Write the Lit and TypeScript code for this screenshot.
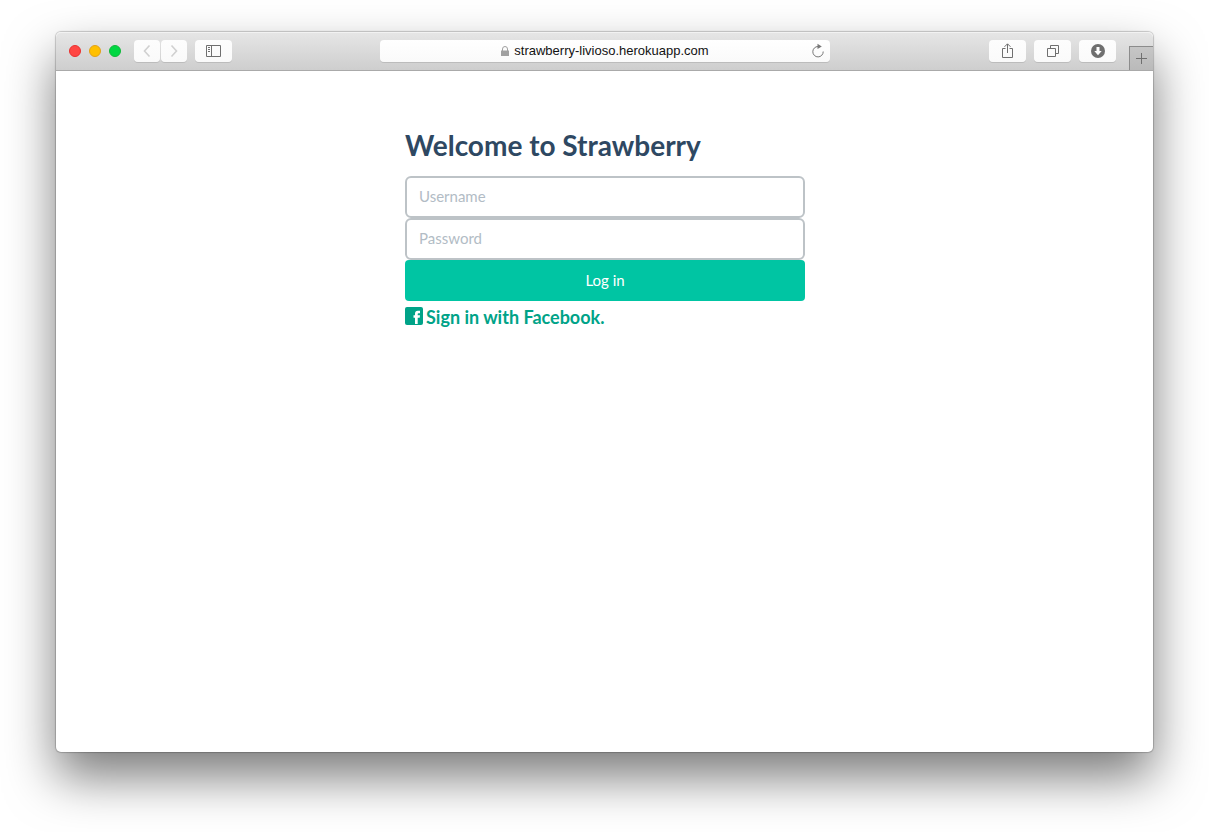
import { LitElement, html, css, svg } from "lit";
import { customElement } from "lit/decorators.js";

const icons = {
  back: svg`<path d="M9.500 1.500 4.500 7l5 5.500" stroke-width="1.600"/>`,
  forward: svg`<path d="M4.500 1.500l5 5.500-5 5.500" stroke-width="1.600"/>`,
};

@customElement("browser-toolbar")
class BrowserToolbar extends LitElement {
  static styles = css`
    :host {
      display: grid;
      grid-template-columns: 1fr minmax(0, 450px) 1fr;
      height: 39px;
      box-sizing: border-box;
      padding-left: 1px;
      background: linear-gradient(#e6e6e6, #cecece);
      border-bottom: 1px solid #aaa;
      box-shadow: inset 0 1px #f2f2f2;
      border-radius: 5px 5px 0 0;
      font: 13px/16px "Liberation Sans", Arial, sans-serif;
    }
    .group {
      display: flex;
      align-items: flex-start;
      padding-top: 8px;
      gap: 8px;
    }
    .left {
      padding-left: 12px;
    }
    .right {
      justify-content: flex-end;
      padding-top: 0;
    }
    .right .tool {
      margin-top: 8px;
    }
    .lights {
      display: flex;
      gap: 8px;
      padding: 5px 5px 0 0;
    }
    button {
      display: flex;
      align-items: center;
      justify-content: center;
      padding: 0;
      border: 0;
      font: inherit;
    }
    .light {
      width: 12px;
      height: 12px;
      border-radius: 50%;
      box-sizing: border-box;
    }
    .close {
      background: #ff4643;
      border: 1px solid #e9302f;
    }
    .minimise {
      background: #ffc000;
      border: 1px solid #e3a116;
    }
    .zoom {
      background: #00d742;
      border: 1px solid #10b83a;
    }
    .history {
      display: flex;
      gap: 1px;
    }
    .tool {
      width: 37px;
      height: 22px;
      border-radius: 4px;
      background: linear-gradient(#fdfdfd, #fafafa);
      box-shadow: 0 1px #bcbcbc;
    }
    .history .tool {
      width: 26px;
    }
    svg {
      display: block;
      fill: none;
      stroke: #6f6f6f;
    }
    .history svg {
      stroke: #d0d0d0;
    }
    .address {
      display: flex;
      align-items: center;
      height: 22px;
      margin-top: 8px;
      border-radius: 4px;
      background: linear-gradient(#fff, #fafafa);
      box-shadow: 0 1px #bcbcbc;
      color: #111;
    }
    .site {
      flex: 1;
      display: flex;
      justify-content: center;
      align-items: center;
      gap: 5px;
      padding-left: 20px;
    }
    .reload {
      width: 14px;
      height: 16px;
      margin-right: 6px;
      background: none;
    }
    .newtab {
      width: 24px;
      height: 24px;
      margin: 14px 0 0 5px;
      box-sizing: border-box;
      background: linear-gradient(#c6c6c6, #bababa);
      border-top: 1px solid #8c8c8c;
      border-left: 1px solid #8c8c8c;
    }
  `;

  render() {
    return html`
      <div class="group left">
        <div class="lights">
          <button class="light close" aria-label="Close"></button>
          <button class="light minimise" aria-label="Minimise"></button>
          <button class="light zoom" aria-label="Zoom"></button>
        </div>
        <div class="history">
          <button class="tool" aria-label="Back">
            <svg width="14" height="14">${icons.back}</svg>
          </button>
          <button class="tool" aria-label="Forward">
            <svg width="14" height="14">${icons.forward}</svg>
          </button>
        </div>
        <button class="tool" aria-label="Show sidebar">
          <svg width="15" height="12">
            <path d="M.5.5h14v11H.5zM5.5.5v11M2 2.500h2M2 4.500h2M2 6.500h2" />
          </svg>
        </button>
      </div>
      <div class="address">
        <div class="site">
          <svg width="8" height="10">
            <path d="M0 4.500h8V10H0z" fill="#a0a0a0" stroke="none" />
            <path d="M1.500 5V3a2.500 2.500 0 0 1 5 0v2" stroke="#a0a0a0" />
          </svg>
          <span>strawberry-livioso.herokuapp.com</span>
        </div>
        <button class="reload" aria-label="Reload">
          <svg width="14" height="16">
            <path d="M8 3.500A5.200 5.200 0 1 0 13.200 8.500" stroke="#777" />
            <path d="M7.500.8l4.300 2.700-4.300 2.500z" fill="#777" stroke="none" />
          </svg>
        </button>
      </div>
      <div class="group right">
        <button class="tool" aria-label="Share">
          <svg width="13" height="16">
            <path d="M4.500 5.500H1.500v9h10v-9h-3M6.500 10V1M3.500 3.800l3-3 3 3" />
          </svg>
        </button>
        <button class="tool" aria-label="Show all tabs">
          <svg width="13" height="12">
            <path d="M1.500 3.500h8v8h-8zM4.500 3V.5h8v8H10" />
          </svg>
        </button>
        <button class="tool" aria-label="Downloads">
          <svg width="14" height="14">
            <circle cx="7" cy="7" r="7" fill="#6f6f6f" stroke="none" />
            <path d="M5.500 3h3v4h2.200L7 11.200 3.300 7h2.200z" fill="#fff" stroke="none" />
          </svg>
        </button>
        <button class="newtab" aria-label="New tab">
          <svg width="11" height="11">
            <path d="M5.500 0v11M0 5.500h11" />
          </svg>
        </button>
      </div>
    `;
  }
}

@customElement("login-form")
class LoginForm extends LitElement {
  static styles = css`
    :host {
      display: block;
      width: 100%;
      max-width: 400px;
      margin: 0 auto;
      font: 15px/22px Lato, sans-serif;
    }
    h1 {
      margin: 0 0 15px;
      font-size: 28px;
      line-height: 32px;
      font-weight: 700;
      color: #2e4862;
    }
    form {
      display: flex;
      flex-direction: column;
    }
    input {
      height: 42px;
      box-sizing: border-box;
      width: 100%;
      padding: 7px 12px 9px;
      border: 2px solid #bdc3c7;
      border-radius: 6px;
      background: #fff;
      color: #34495e;
      font: inherit;
    }
    input::placeholder {
      color: #b2bcc5;
      opacity: 1;
    }
    .submit {
      height: 41px;
      padding: 0 0 2px;
      border: 0;
      border-radius: 4px;
      background: #00c5a3;
      color: #fff;
      font: inherit;
    }
    .facebook {
      display: inline-flex;
      align-items: center;
      gap: 3px;
      margin-top: 4px;
      color: #00a388;
      font-size: 18px;
      line-height: 24px;
      font-weight: 700;
      text-decoration: none;
    }
    .facebook svg {
      display: block;
      padding-bottom: 2px;
    }
  `;

  render() {
    return html`
      <h1>Welcome to Strawberry</h1>
      <form @submit=${(e: Event) => e.preventDefault()}>
        <input type="text" placeholder="Username" aria-label="Username" />
        <input type="password" placeholder="Password" aria-label="Password" />
        <button class="submit">Log in</button>
      </form>
      <a class="facebook" href="#">
        <svg width="18" height="18">
          <rect width="18" height="18" rx="2" fill="#00a388" />
          <path
            d="M10 17V10.800H8.500V8.300H10V6.800C10 4.800 11 3.800 12.800 3.800H15V6.300H13.500c-.6 0-.8.3-.8.9V8.300h2.300l-.3 2.500h-2V17z"
            fill="#fff"
          />
        </svg>
        <span>Sign in with Facebook.</span>
      </a>
    `;
  }
}

@customElement("app-root")
class AppRoot extends LitElement {
  static styles = css`
    :host {
      display: flex;
      min-height: 100vh;
      box-sizing: border-box;
      padding: 32px 56px 80px;
      background: #fff;
    }
    .window {
      flex: 1;
      min-width: 0;
      border-radius: 5px;
      background: #fff;
      box-shadow:
        0 0 1px 1px rgba(0, 0, 0, 0.2),
        0 25px 50px rgba(0, 0, 0, 0.52);
    }
    .page {
      padding: 58px 0 40px 1px;
    }
  `;

  render() {
    return html`
      <div class="window">
        <browser-toolbar></browser-toolbar>
        <main class="page"><login-form></login-form></main>
      </div>
    `;
  }
}
